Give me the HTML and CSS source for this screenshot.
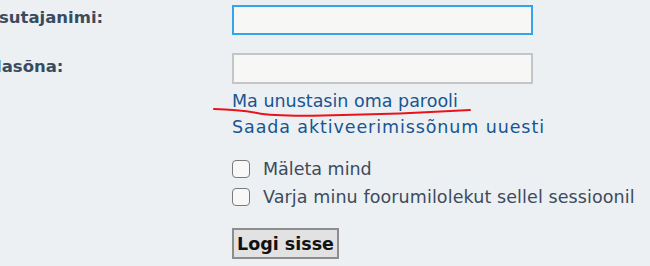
FILE: index.html
```html
<!DOCTYPE html>
<html lang="et">
<head>
<meta charset="utf-8">
<title>Logi sisse</title>
<link rel="stylesheet" href="styles.css">
</head>
<body>
<form class="login">
  <div class="row">
    <label class="lbl" for="u">Kasutajanimi:</label>
    <div class="field"><input id="u" class="txt focus" type="text"></div>
  </div>
  <div class="row row2">
    <label class="lbl" for="p">Salasõna:</label>
    <div class="field"><input id="p" class="txt" type="password"></div>
  </div>
  <div class="row row3">
    <div></div>
    <div class="field links">
      <a href="#" class="lnk">Ma unustasin oma parooli</a>
      <a href="#" class="lnk lnk2">Saada aktiveerimissõnum uuesti</a>
      <svg class="scribble" width="280" height="14" viewBox="0 0 280 14" aria-hidden="true">
        <path d="M1 2 Q25 2.5 44 6 Q62 9.5 110 8.5 Q190 7 257 3" fill="none" stroke="#e8141c" stroke-width="2" stroke-linecap="round"/>
      </svg>
    </div>
  </div>
  <div class="row row4">
    <div></div>
    <div class="field checks">
      <label class="chk"><input type="checkbox"><span>Mäleta mind</span></label>
      <label class="chk chk2"><input type="checkbox"><span>Varja minu foorumilolekut sellel sessioonil</span></label>
    </div>
  </div>
  <div class="row row5">
    <div></div>
    <div class="field"><button type="button" class="btn">Logi sisse</button></div>
  </div>
</form>
</body>
</html>
```
FILE: styles.css
```css
html, body {
  margin: 0;
  padding: 0;
}
body {
  background: #ecf0f2;
  font-family: "DejaVu Sans", Verdana, sans-serif;
  font-size: 17.5px;
  color: #3d4b5c;
  width: 650px;
  height: 266px;
  overflow: hidden;
}
.login {
  margin-left: -25px;
  padding-top: 5px;
}
.row {
  display: grid;
  grid-template-columns: 257px 420px;
  align-items: start;
}
.row2 { margin-top: 18px; }
.row3 { margin-top: 4px; }
.row4 { margin-top: 15px; }
.row5 { margin-top: 17px; }
.lbl {
  font-weight: bold;
  font-size: 16.5px;
  color: #3b4b5e;
  padding-top: 2px;
  line-height: 22px;
  white-space: nowrap;
}
.row2 .lbl { padding-top: 3px; margin-left: -2px; }
.txt {
  display: block;
  box-sizing: border-box;
  width: 301px;
  height: 31px;
  margin: 0;
  border: 2px solid #c3c5c8;
  background: #f7f7f5;
  outline: none;
  font: inherit;
  padding: 2px 6px;
}
.txt.focus {
  height: 30px;
  border-color: #35a5ea;
}
.links {
  position: relative;
  display: flex;
  flex-direction: column;
  align-items: flex-start;
  line-height: 26px;
}
.lnk {
  color: #185593;
  text-decoration: none;
}
.lnk2 { letter-spacing: 0.9px; }
.scribble {
  position: absolute;
  left: -19px;
  top: 19px;
  overflow: visible;
}
.checks {
  display: flex;
  flex-direction: column;
  line-height: 28px;
  white-space: nowrap;
}
.chk {
  display: flex;
  align-items: center;
}
.chk2 span { letter-spacing: 0.1px; }
.chk input {
  appearance: none;
  -webkit-appearance: none;
  flex-shrink: 0;
  box-sizing: border-box;
  width: 18px;
  height: 18px;
  margin: 0 13px 0 0;
  border: 1.5px solid #7a7a7a;
  border-radius: 4px;
  background: #f8f8f8;
}
.btn {
  box-sizing: border-box;
  width: 107px;
  height: 31px;
  margin: 0;
  padding: 0;
  border: 2px solid #8d8d8d;
  background: #e2e2e2;
  font-family: inherit;
  font-size: 17.5px;
  font-weight: bold;
  color: #111;
}
```
